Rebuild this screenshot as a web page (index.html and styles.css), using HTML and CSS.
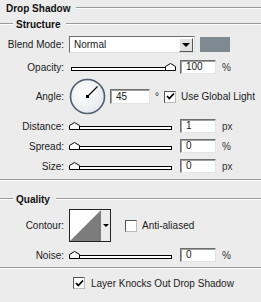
FILE: index.html
```html
<!DOCTYPE html>
<html>
<head>
<meta charset="utf-8">
<link rel="stylesheet" href="styles.css">
</head>
<body>
<div class="panel">
  <div class="legend title"><span>Drop Shadow</span><i class="rule"></i></div>
  <div class="legend sub"><i class="lead"></i><span>Structure</span><i class="rule"></i></div>

  <div class="row r-blend">
    <span class="lbl">Blend Mode:</span>
    <div class="select"><span class="sel-text">Normal</span><span class="sel-btn"><i class="tri"></i></span></div>
    <span class="swatch"></span>
  </div>

  <div class="row r-opacity">
    <span class="lbl">Opacity:</span>
    <div class="slider"><span class="track"></span><svg class="thumb at-end" width="11" height="8" viewBox="0 0 11 8"><polygon points="0.5,7.5 0.5,3.5 5.5,0.5 10.5,3.5 10.5,7.5" fill="#fff" stroke="#000"/></svg></div>
    <span class="box">100</span><span class="unit">%</span>
  </div>

  <div class="row r-angle">
    <span class="lbl">Angle:</span>
    <svg class="dial" width="37" height="37" viewBox="0 0 37 37">
      <defs><radialGradient id="g" cx="0.4" cy="0.4" r="0.7"><stop offset="0" stop-color="#ffffff"/><stop offset="1" stop-color="#e4e6ea"/></radialGradient></defs>
      <circle cx="18.5" cy="18.5" r="17" fill="url(#g)" stroke="#4e5a6e" stroke-width="1.6"/>
      <line x1="18.5" y1="18.5" x2="28.5" y2="8.5" stroke="#000" stroke-width="1.1"/>
      <rect x="17" y="17" width="3" height="3" fill="#000"/>
    </svg>
    <span class="box box-angle">45</span><span class="deg">°</span>
    <span class="check checked"><svg width="9" height="9" viewBox="0 0 9 9"><path d="M1 4 L3.3 6.5 L8 1.5" fill="none" stroke="#000" stroke-width="1.8"/></svg></span>
    <span class="ck-text">Use Global Light</span>
  </div>

  <div class="row r-dist">
    <span class="lbl">Distance:</span>
    <div class="slider"><span class="track"></span><svg class="thumb" width="11" height="8" viewBox="0 0 11 8"><polygon points="0.5,7.5 0.5,3.5 5.5,0.5 10.5,3.5 10.5,7.5" fill="#fff" stroke="#000"/></svg></div>
    <span class="box">1</span><span class="unit">px</span>
  </div>
  <div class="row r-next">
    <span class="lbl">Spread:</span>
    <div class="slider"><span class="track"></span><svg class="thumb" width="11" height="8" viewBox="0 0 11 8"><polygon points="0.5,7.5 0.5,3.5 5.5,0.5 10.5,3.5 10.5,7.5" fill="#fff" stroke="#000"/></svg></div>
    <span class="box">0</span><span class="unit">%</span>
  </div>
  <div class="row r-next">
    <span class="lbl">Size:</span>
    <div class="slider"><span class="track"></span><svg class="thumb" width="11" height="8" viewBox="0 0 11 8"><polygon points="0.5,7.5 0.5,3.5 5.5,0.5 10.5,3.5 10.5,7.5" fill="#fff" stroke="#000"/></svg></div>
    <span class="box">0</span><span class="unit">px</span>
  </div>

  <div class="sep sep1"></div>

  <div class="legend sub q"><i class="lead"></i><span>Quality</span><i class="rule"></i></div>

  <div class="row r-contour">
    <span class="lbl">Contour:</span>
    <div class="contour">
      <svg class="curve" width="31" height="31" viewBox="0 0 31 31"><rect width="31" height="31" fill="#fff"/><polygon points="0,31 31,0 31,31" fill="#7c7c7c"/></svg>
      <span class="ct-btn"><i class="tri small"></i></span>
    </div>
    <span class="check"></span>
    <span class="ck-text">Anti-aliased</span>
  </div>

  <div class="row r-noise">
    <span class="lbl">Noise:</span>
    <div class="slider"><span class="track"></span><svg class="thumb" width="11" height="8" viewBox="0 0 11 8"><polygon points="0.5,7.5 0.5,3.5 5.5,0.5 10.5,3.5 10.5,7.5" fill="#fff" stroke="#000"/></svg></div>
    <span class="box">0</span><span class="unit">%</span>
  </div>

  <div class="sep sep2"></div>

  <div class="row r-knock">
    <span class="check checked"><svg width="9" height="9" viewBox="0 0 9 9"><path d="M1 4 L3.3 6.5 L8 1.5" fill="none" stroke="#000" stroke-width="1.8"/></svg></span>
    <span class="ck-text">Layer Knocks Out Drop Shadow</span>
  </div>
</div>
</body>
</html>
```

FILE: styles.css
```css
* { box-sizing: border-box; }
html, body { margin: 0; padding: 0; }
body {
  background: #ececec;
  font-family: "Liberation Sans", Arial, sans-serif;
  font-size: 10px;
  color: #1a1a1a;
  width: 261px;
  height: 302px;
  overflow: hidden;
}
.panel { width: 261px; }

.legend {
  display: flex;
  align-items: center;
  height: 16px;
  font-weight: bold;
  font-size: 10px;
  color: #111;
}
.legend .rule {
  flex: 1;
  height: 2px;
  border-top: 1px solid #9a9a9a;
  border-bottom: 1px solid #ffffff;
  margin-left: 6px;
}
.title { padding-left: 6px; }
.sub .lead {
  width: 13px;
  height: 2px;
  border-top: 1px solid #9a9a9a;
  border-bottom: 1px solid #ffffff;
  margin-right: 3px;
}

.row {
  display: flex;
  align-items: center;
  height: 14px;
}
.lbl {
  width: 64px;
  text-align: right;
  margin-right: 5px;
  flex: none;
}

.r-blend { height: 17px; margin-top: 4px; }
.select {
  width: 126px;
  height: 17px;
  background: #fff;
  border: 1px solid;
  border-color: #6e6e6e #dcdcdc #dcdcdc #6e6e6e;
  display: flex;
  align-items: center;
  justify-content: space-between;
  padding: 1px;
}
.sel-text { padding-left: 3px; font-size: 10px; }
.sel-btn {
  width: 14px;
  height: 14px;
  background: #e2e2e2;
  border: 1px solid;
  border-color: #fff #555 #555 #fff;
  display: flex;
  align-items: center;
  justify-content: center;
}
.tri {
  width: 0; height: 0;
  border-left: 4px solid transparent;
  border-right: 4px solid transparent;
  border-top: 4px solid #000;
}
.tri.small {
  border-left-width: 3px;
  border-right-width: 3px;
  border-top-width: 3px;
}
.swatch {
  width: 30px;
  height: 15px;
  margin-left: 5px;
  background: #7e8a91;
}

.r-opacity { margin-top: 7px; }
.slider {
  position: relative;
  width: 107px;
  height: 14px;
  margin-right: 4px;
  flex: none;
}
.track {
  position: absolute;
  left: 2px;
  right: 4px;
  top: 7px;
  height: 4px;
  border: 1px solid #000;
  background: #fff;
}
.thumb { position: absolute; left: 0; top: 3px; }
.thumb.at-end { left: 96px; }

.box {
  width: 36px;
  height: 14px;
  background: #fff;
  border: 1px solid;
  border-color: #6e6e6e #e4e4e4 #e4e4e4 #6e6e6e;
  box-shadow: inset 1px 1px 0 #a0a0a0;
  padding-left: 5px;
  line-height: 12px;
  font-size: 10px;
  flex: none;
}
.unit { margin-left: 6px; color: #333; }

.r-angle { height: 37px; margin-top: 4px; }
.dial { flex: none; }
.box-angle { width: 40px; height: 15px; margin-left: 4px; line-height: 13px; }
.deg { margin-left: 5px; width: 9px; }
.check {
  width: 12px;
  height: 12px;
  background: #fff;
  border: 1px solid;
  border-color: #555 #bbb #bbb #555;
  display: flex;
  align-items: center;
  justify-content: center;
  flex: none;
}
.ck-text { margin-left: 5px; white-space: nowrap; }

.r-dist { margin-top: 4px; }
.r-next { margin-top: 6px; }

.sep {
  height: 2px;
  border-top: 1px solid #9a9a9a;
  border-bottom: 1px solid #fff;
}
.sep1 { margin-top: 6px; }
.q { margin-top: 10px; }

.r-contour { height: 33px; margin-top: 2px; }
.contour {
  width: 42px;
  height: 33px;
  border: 1px solid #222;
  display: flex;
  background: #fff;
  flex: none;
}
.curve { display: block; }
.ct-btn {
  flex: 1;
  background: #ececec;
  display: flex;
  align-items: center;
  justify-content: center;
}
.r-contour .check { margin-left: 14px; }

.r-noise { margin-top: 6px; }
.sep2 { margin-top: 5px; }

.r-knock { margin-top: 7px; padding-left: 73px; }
.r-knock .ck-text { margin-left: 6px; }
```
